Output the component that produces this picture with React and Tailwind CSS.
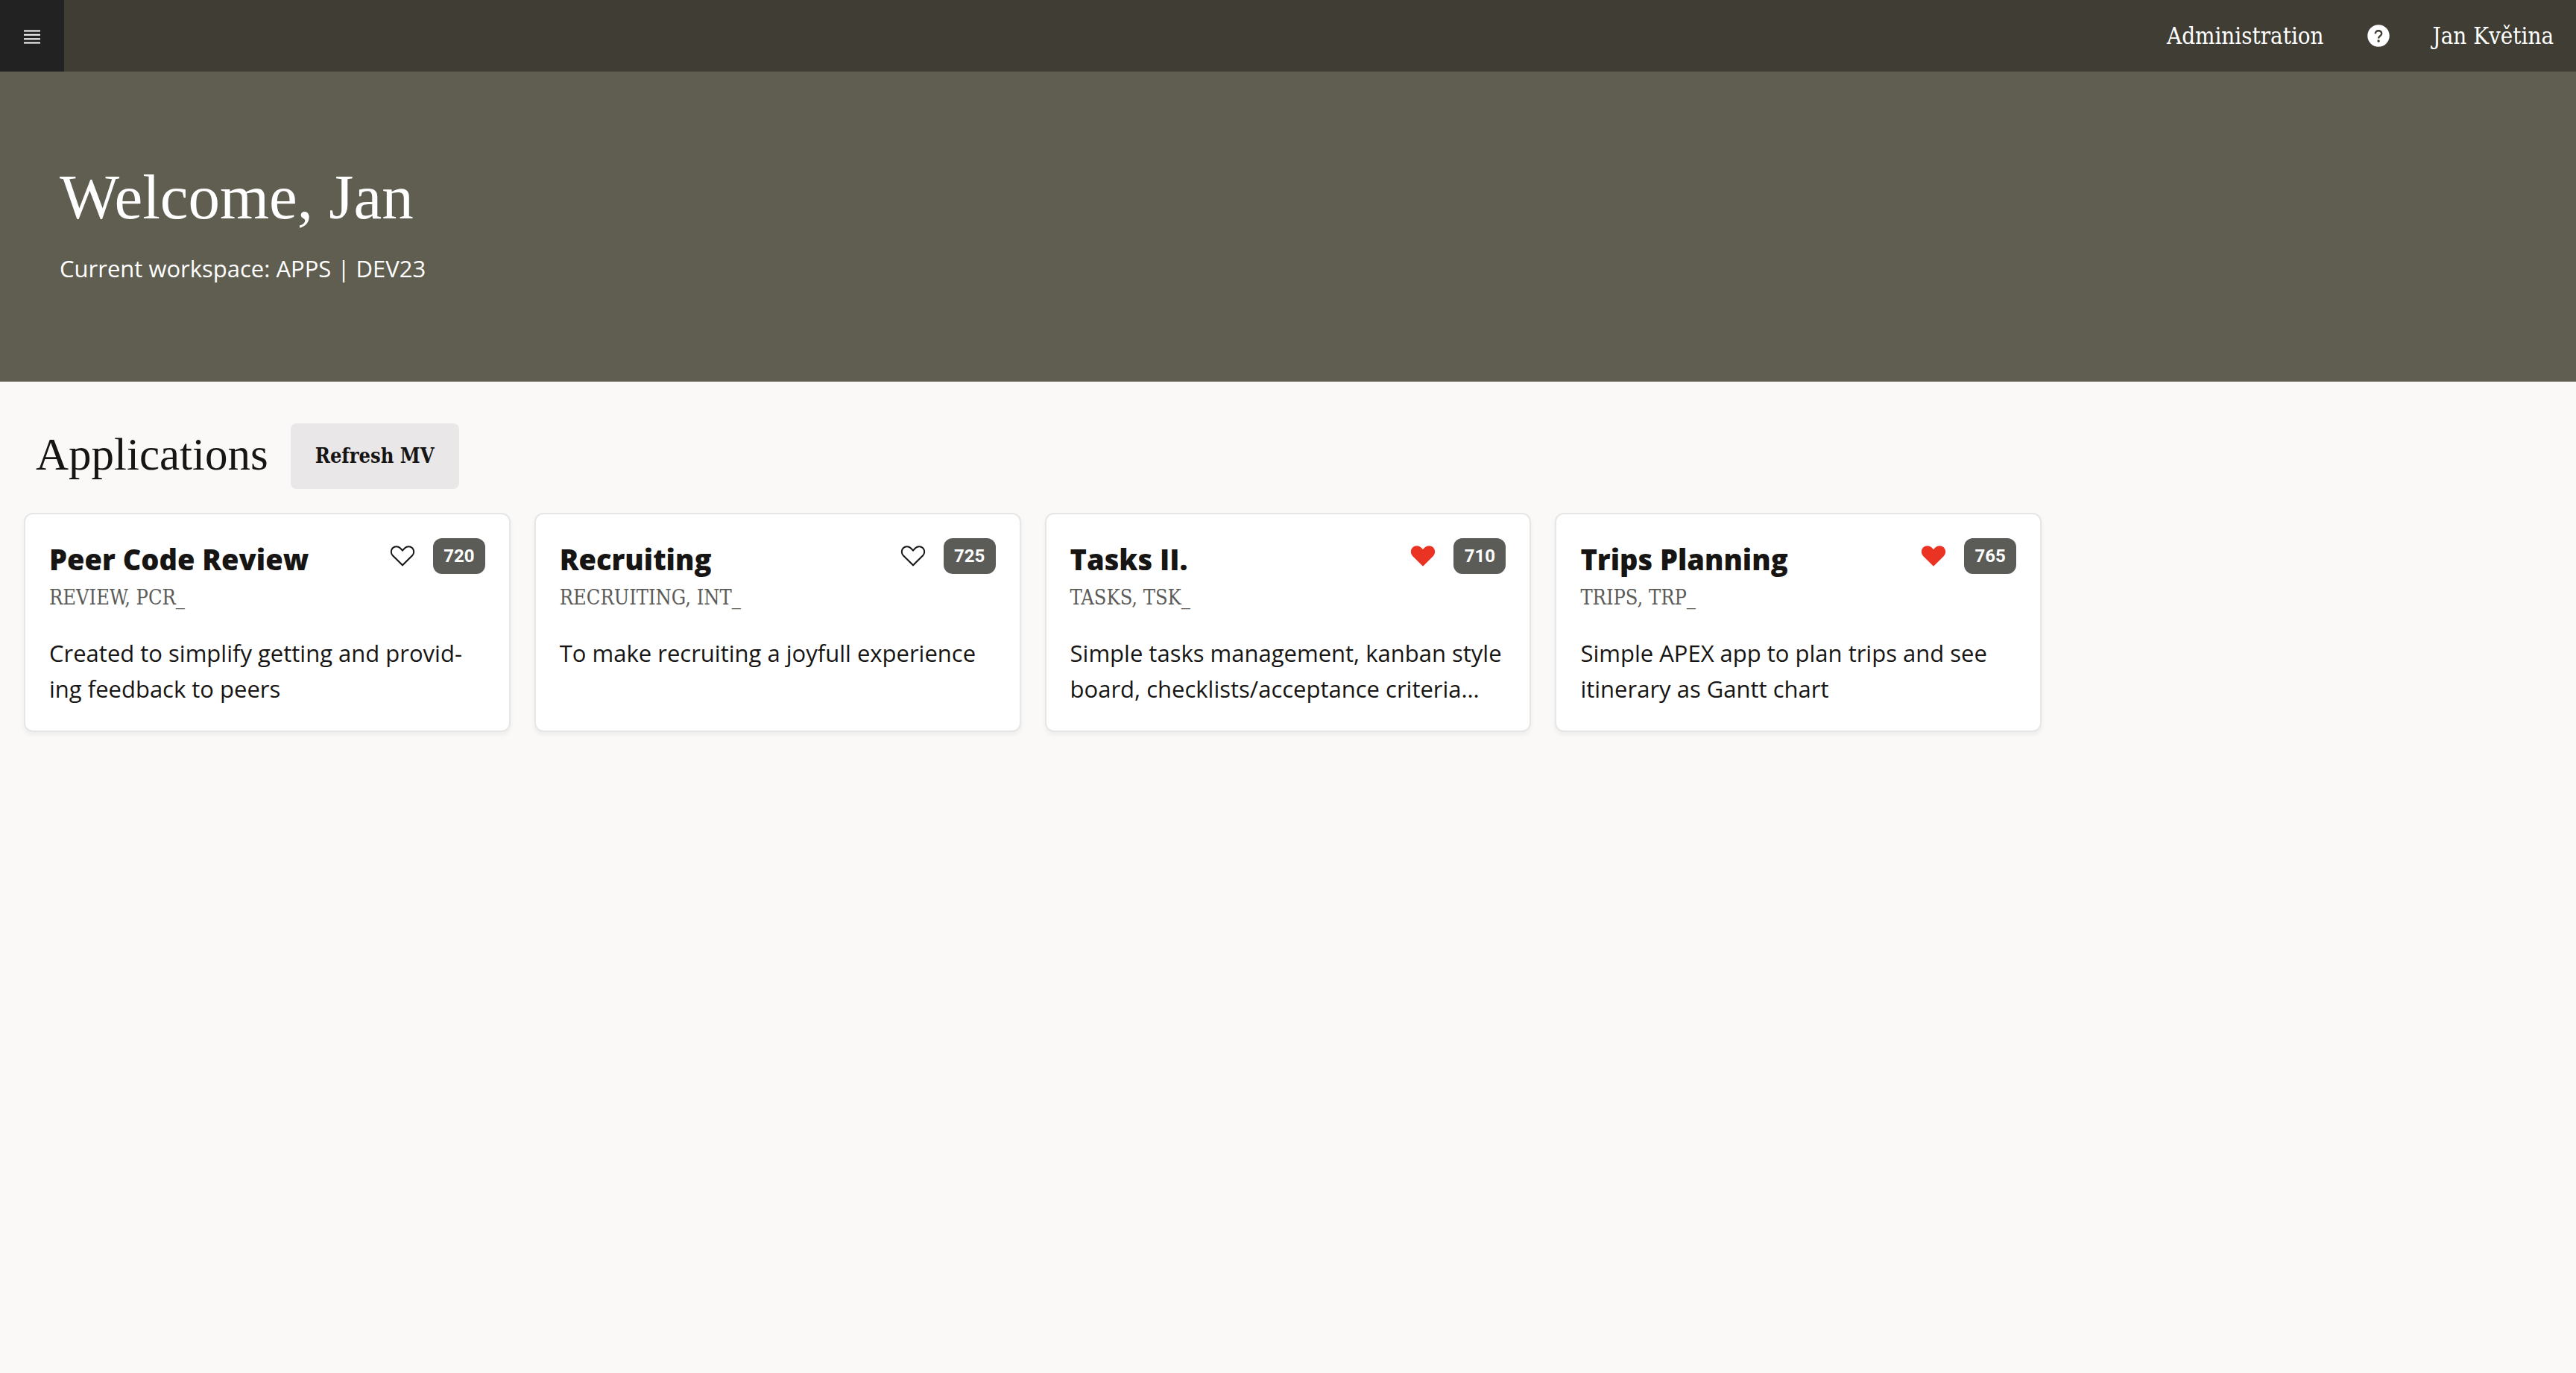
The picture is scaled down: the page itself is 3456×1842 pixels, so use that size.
const apps = [
  {
    name: "Peer Code Review",
    alias: "REVIEW, PCR_",
    id: 720,
    favorite: false,
    description: "Created to simplify getting and provid\u00ADing feedback to peers",
  },
  {
    name: "Recruiting",
    alias: "RECRUITING, INT_",
    id: 725,
    favorite: false,
    description: "To make recruiting a joyfull experience",
  },
  {
    name: "Tasks II.",
    alias: "TASKS, TSK_",
    id: 710,
    favorite: true,
    description: "Simple tasks management, kanban style board, checklists/acceptance criteria…",
  },
  {
    name: "Trips Planning",
    alias: "TRIPS, TRP_",
    id: 765,
    favorite: true,
    description: "Simple APEX app to plan trips and see itinerary as Gantt chart",
  },
];

function MenuIcon() {
  return (
    <svg viewBox="0 0 22 22" className="size-[22px]" stroke="currentColor" strokeWidth="2" aria-hidden="true">
      <path d="M0 4.500h22M0 9.800h22M0 15.200h22M0 20.500h22" />
    </svg>
  );
}

function HelpIcon() {
  return (
    <svg viewBox="0 0 30 30" className="size-[30px]" aria-hidden="true">
      <circle cx="15" cy="15" r="14.700" fill="#fff" />
      <path
        d="M10.800 12.200c0-2.400 1.800-4 4.200-4s4.200 1.500 4.200 3.700c0 1.600-.8 2.500-2 3.300-1.300.9-2.100 1.500-2.100 3.200"
        fill="none"
        stroke="#403d35"
        strokeWidth="2.400"
      />
      <circle cx="15.100" cy="22" r="1.700" fill="#403d35" />
    </svg>
  );
}

function HeartIcon({ filled }) {
  return (
    <svg
      viewBox="0 0 34 28"
      className={filled ? "h-7 w-[34px] text-[#ea3323]" : "h-7 w-[34px] text-[#161513]"}
      fill={filled ? "currentColor" : "none"}
      stroke="currentColor"
      strokeWidth="2"
      aria-hidden="true"
    >
      <path d="M17 26.300 3.800 13.200a7.100 7.100 0 0 1 0-9.900 7.100 7.100 0 0 1 10 0L17 6.500l3.200-3.200a7.100 7.100 0 0 1 10 0 7.100 7.100 0 0 1 0 9.900z" />
    </svg>
  );
}

function AppCard({ app }) {
  return (
    <li className="flex flex-col rounded-xl border-2 border-[#e6e6e6] bg-white p-8 shadow-[0_4px_6px_rgba(0,0,0,0.05)]">
      <div className="flex items-start justify-between">
        <h3 className="text-[38px] leading-[56px] font-extrabold">
          <a href="#">{app.name}</a>
        </h3>
        <div className="flex items-center gap-6">
          <button type="button" aria-label={`Favorite ${app.name}`} aria-pressed={app.favorite}>
            <HeartIcon filled={app.favorite} />
          </button>
          <span className="flex h-12 min-w-[70px] items-center justify-center rounded-xl bg-[#5b5b58] font-[Roboto,sans-serif] text-2xl font-bold text-white">
            {app.id}
          </span>
        </div>
      </div>
      <p className="mt-1 font-['DejaVu_Serif_Condensed','DejaVu_Serif',serif] text-[27px] leading-10 text-[#5b5b58]">
        {app.alias}
      </p>
      <p className="mt-[30px] text-[31px] leading-[48px]">{app.description}</p>
    </li>
  );
}

export default function App() {
  return (
    <div className="min-h-screen bg-[#fbf9f8] font-['Open_Sans',sans-serif] text-[#161513]">
      <header className="flex h-24 items-stretch justify-between bg-[#403d35] text-white">
        <button type="button" aria-label="Menu" className="flex w-[86px] items-center justify-center bg-[#222222]">
          <MenuIcon />
        </button>
        <nav className="flex items-center gap-[58px] pr-[30px] font-['DejaVu_Serif_Condensed','DejaVu_Serif',serif] text-[31px]">
          <a href="#">Administration</a>
          <a href="#" aria-label="Help">
            <HelpIcon />
          </a>
          <a href="#">Jan Květina</a>
        </nav>
      </header>

      <section className="bg-[#605e51] px-20 pt-[116px] pb-32 text-white">
        <h1 className="font-['Liberation_Serif',serif] text-[85px] leading-[104px]">Welcome, Jan</h1>
        <p className="mt-5 text-[31px] leading-[48px]">Current workspace: APPS | DEV23</p>
      </section>

      <main className="px-8 pt-14">
        <div className="flex items-center gap-[30px] px-4">
          <h2 className="pb-1 font-['Liberation_Serif',serif] text-[61px] leading-[72px]">Applications</h2>
          <button
            type="button"
            className="h-[88px] rounded-lg bg-[#e9e7e8] px-[33px] font-['DejaVu_Serif_Condensed','DejaVu_Serif',serif] text-[27px] font-bold"
          >
            Refresh MV
          </button>
        </div>
        <ul className="mt-8 grid grid-cols-5 gap-8">
          {apps.map((app) => (
            <AppCard key={app.id} app={app} />
          ))}
        </ul>
      </main>
    </div>
  );
}
